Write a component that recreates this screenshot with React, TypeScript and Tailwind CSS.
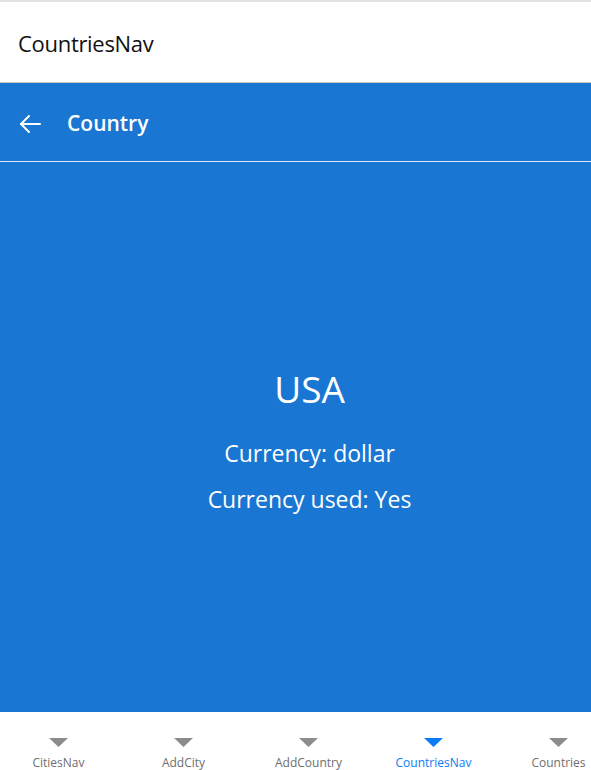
import React from "react";

const tabs = [
  { label: "CitiesNav", active: false },
  { label: "AddCity", active: false },
  { label: "AddCountry", active: false },
  { label: "CountriesNav", active: true },
  { label: "Countries", active: false },
];

const Triangle = ({ active }: { active: boolean }) => (
  <svg width="19" height="9" viewBox="0 0 19 9">
    <polygon points="0,0 19,0 9.5,9" fill={active ? "#0a7cf5" : "#8c8c8c"} />
  </svg>
);

export default function App() {
  return (
    <div className="w-[591px] h-[770px] overflow-hidden flex flex-col bg-white font-['Open_Sans','Noto_Sans',sans-serif]">
      {/* App title */}
      <div className="h-[83px] shrink-0 border-t-2 border-[#e3e3e3] border-b border-b-[#c8c8c8] flex items-center px-[18px] pt-[3px]">
        <span className="text-[22px] text-[#111] tracking-[-0.3px]">CountriesNav</span>
      </div>

      {/* Page header */}
      <div className="h-[79px] shrink-0 bg-[#1976d2] border-b border-[#d9e6f5] flex items-center pt-[3px]">
        <div className="w-[67px] pl-[19px] flex items-center">
          <svg width="22" height="20" viewBox="0 0 22 20" fill="none" stroke="white" strokeWidth="2" strokeLinecap="round" strokeLinejoin="round">
            <path d="M21 10H2" />
            <path d="M10 2L2 10L10 18" />
          </svg>
        </div>
        <span className="text-[21px] font-semibold text-white">Country</span>
      </div>

      {/* Content */}
      <div className="flex-1 bg-[#1976d2] flex flex-col items-center justify-center text-white pt-[14px] pl-[28px]">
        <div className="text-[37px] leading-[46px]">USA</div>
        <div className="mt-[18px] text-[23px] leading-[46px]">Currency: dollar</div>
        <div className="text-[23px] leading-[46px]">Currency used: Yes</div>
      </div>

      {/* Tab bar */}
      <div className="h-[58px] shrink-0 bg-white flex ml-[-4px]">
        {tabs.map((t) => (
          <div key={t.label} className="w-[125px] shrink-0 flex flex-col items-center pt-[26px]">
            <Triangle active={t.active} />
            <span className={`mt-[9px] text-[12px] leading-[14px] ${t.active ? "text-[#0a7cf5]" : "text-[#6e6e6e]"}`}>
              {t.label}
            </span>
          </div>
        ))}
      </div>
    </div>
  );
}
